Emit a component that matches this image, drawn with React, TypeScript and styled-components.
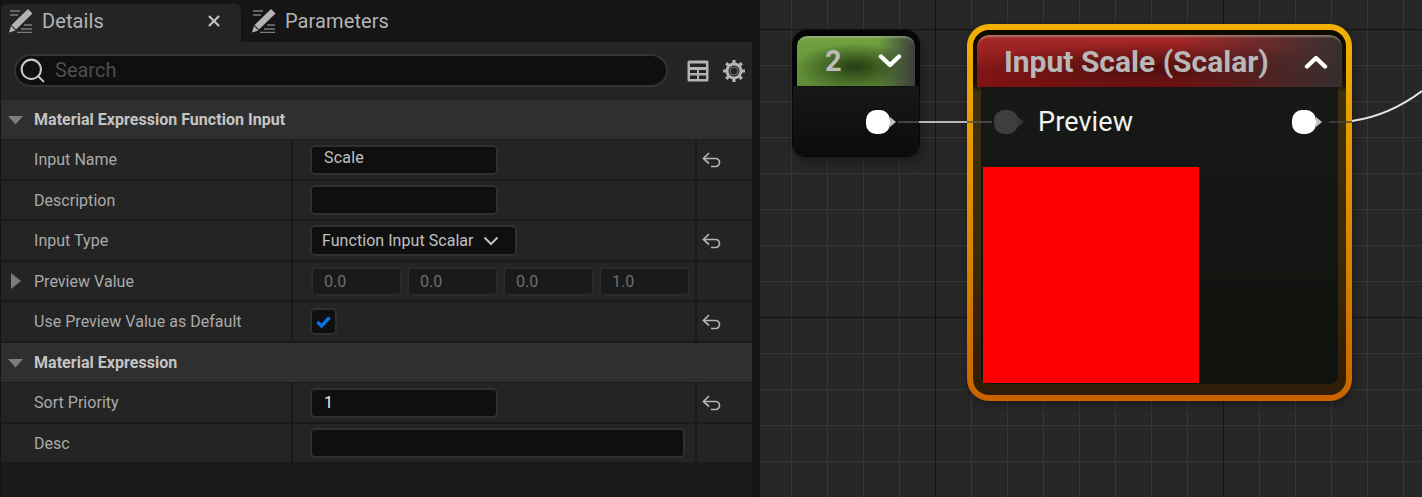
import { createGlobalStyle, styled } from 'styled-components';
import { Search as SearchIcon, X } from 'lucide-react';

const GlobalStyle = createGlobalStyle`
  html, body {
    margin: 0;
    background: #1a1a1a;
    overflow: hidden;
  }
  #root {
    width: 1422px;
    height: 497px;
  }
  * {
    box-sizing: border-box;
  }
`;

const Page = styled.div`
  display: flex;
  width: 1422px;
  height: 497px;
  font-family: Roboto, sans-serif;
  background: #151515;
`;

const Panel = styled.div`
  display: flex;
  flex-direction: column;
  flex: 0 0 752px;
  background: #1a1a1a;
  border-left: 1px solid #141414;
`;

const TabBar = styled.div`
  display: flex;
  align-items: flex-end;
  height: 42px;
  flex: none;
  background: #151515;
`;

const Tab = styled.div<{ $active?: boolean }>`
  display: flex;
  align-items: center;
  width: 240px;
  height: 38px;
  padding: 0 0 4px ${(p) => (p.$active ? 8 : 11)}px;
  border-radius: 6px 6px 0 0;
  background: ${(p) => (p.$active ? '#242424' : 'transparent')};
  color: #b4b4b4;
  font-size: 20px;
  letter-spacing: 0.1px;
  gap: 9px;
`;

const TabClose = styled.span`
  display: flex;
  margin-left: auto;
  margin-right: 18px;
  color: #c4c4c4;
`;

const Toolbar = styled.div`
  display: flex;
  align-items: center;
  height: 58px;
  flex: none;
  padding: 0 6px 1px 13px;
  background: #242424;
`;

const SearchBox = styled.div`
  display: flex;
  align-items: center;
  gap: 8px;
  width: 654px;
  height: 33px;
  padding-left: 2px;
  border: 2px solid #333;
  border-radius: 17px;
  background: #0f0f0f;
  color: #c8c8c8;
`;

const SearchText = styled.span`
  padding-bottom: 2px;
  color: #4e4e4e;
  font-size: 20px;
`;

const ToolIcons = styled.div`
  display: flex;
  align-items: center;
  gap: 13px;
  margin: 0 0 -1px 19px;
  color: #b4b4b4;
`;

const SectionHeader = styled.div`
  display: flex;
  align-items: center;
  gap: 11px;
  height: 40px;
  flex: none;
  padding-left: 7px;
  background: #2f2f2f;
  border-bottom: 1px solid #1c1c1c;
  color: #c4c4c4;
  font-size: 16px;
  font-weight: 700;
  letter-spacing: 0.03px;
`;

const Row = styled.div<{ $tall?: boolean }>`
  display: grid;
  grid-template-columns: 290px 404px 57px;
  height: ${(p) => (p.$tall ? 41 : 40)}px;
  flex: none;
  background: #242424;
  border-bottom: 2px solid #1a1a1a;
`;

const NameCell = styled.div`
  display: flex;
  align-items: center;
  padding-left: 33px;
  position: relative;
  color: #aaa;
  font-size: 16px;
  letter-spacing: 0.03px;
`;

const ExpandArrow = styled.span`
  position: absolute;
  left: 10px;
  top: 11px;
  width: 0;
  height: 0;
  border-style: solid;
  border-width: 8px 0 8px 10px;
  border-color: transparent transparent transparent #7a7a7a;
`;

const ValueCell = styled.div`
  display: flex;
  align-items: center;
  gap: 5px;
  padding-left: 17px;
  border-left: 2px solid #1a1a1a;
`;

const ResetCell = styled.div`
  display: flex;
  align-items: center;
  padding-left: 5px;
  border-left: 2px solid #1a1a1a;
  color: #b4b4b4;
`;

const Field = styled.div<{ $width: number }>`
  display: flex;
  align-items: center;
  width: ${(p) => p.$width}px;
  height: 30px;
  padding-left: 12px;
  border: 2px solid #303030;
  border-radius: 5px;
  background: #0f0f0f;
  color: #c0c0c0;
  font-size: 16px;
`;

const NameField = styled(Field)`
  padding-bottom: 5px;
  letter-spacing: 0.2px;
`;

const SortField = styled(Field)`
  color: #eee;
`;

const NumberField = styled.div`
  display: flex;
  align-items: center;
  width: 91px;
  height: 29px;
  padding-left: 11px;
  border: 2px solid #2a2a2a;
  border-radius: 5px;
  background: #1a1a1a;
  color: #6e6e6e;
  font-size: 16px;
  &:first-child {
    margin-left: 1px;
  }
`;

const Dropdown = styled.div`
  display: flex;
  align-items: center;
  gap: 9px;
  width: 207px;
  height: 31px;
  padding-left: 10px;
  border: 2px solid #303030;
  border-radius: 5px;
  background: #0f0f0f;
  color: #c0c0c0;
  font-size: 16px;
  letter-spacing: 0.05px;
`;

const CheckBox = styled.div`
  display: flex;
  align-items: center;
  justify-content: center;
  width: 27px;
  height: 27px;
  border: 2px solid #303030;
  border-radius: 5px;
  background: #0f0f0f;
  color: #0f70e0;
`;

const Gutter = styled.div`
  flex: 0 0 8px;
  background: #151515;
`;

const Canvas = styled.div`
  position: relative;
  flex: 1;
  overflow: hidden;
  background-color: #272727;
  background-image:
    linear-gradient(to right, #131313 1px, transparent 1px),
    linear-gradient(to bottom, #131313 1px, transparent 1px),
    linear-gradient(to right, #363636 1px, transparent 1px),
    linear-gradient(to bottom, #363636 1px, transparent 1px);
  background-size: 288px 288px, 288px 288px, 36px 36px, 36px 36px;
  background-position: 175px 29px, 175px 29px, 31px 29px, 31px 29px;
`;

const Wires = styled.svg`
  position: absolute;
  inset: 0;
  z-index: 3;
`;

const SmallNode = styled.div`
  position: absolute;
  left: 33px;
  top: 31px;
  width: 126px;
  height: 125px;
  padding: 5px 4px;
  border-radius: 13px;
  background: linear-gradient(to bottom, #050505 0, #050505 55px, #171917 56px, #0a0c09 100%);
  box-shadow: 0 0 0 1px #070707, 2px 4px 12px rgba(0, 0, 0, 0.45);
`;

const SmallHeader = styled.div`
  display: flex;
  align-items: center;
  justify-content: space-between;
  height: 50px;
  padding: 0 13px 0 28px;
  border-radius: 10px 10px 0 0;
  background:
    linear-gradient(to right, transparent 68%, #3c3c3c 100%),
    radial-gradient(ellipse 60px 24px at 58px 31px, #2a4416 10%, transparent 100%),
    linear-gradient(to bottom, #72a440, #5e8a36);
  box-shadow: inset 0 3px 2px -1px rgba(190, 190, 180, 0.45);
  color: #bcbcbc;
  font-size: 29px;
  font-weight: 700;
`;

const BigNode = styled.div`
  position: absolute;
  left: 207px;
  top: 24px;
  width: 385px;
  height: 377px;
  padding: 6px;
  border-radius: 22px;
  background: linear-gradient(to bottom, #f1b000, #c96400);
  box-shadow: 1px 3px 10px rgba(0, 0, 0, 0.35);
`;

const BigInner = styled.div`
  display: flex;
  flex-direction: column;
  height: 100%;
  padding: 5px 4px 0;
  border-radius: 16px;
  background: linear-gradient(to bottom, #0c0902 0, #1a1404 55px, #3d2f10 62px, #3a2a0e 220px, #2f1d08 100%);
`;

const BigHeader = styled.div`
  display: flex;
  align-items: center;
  justify-content: space-between;
  height: 52px;
  flex: none;
  padding: 0 14px 0 27px;
  border-radius: 12px 12px 0 0;
  background:
    linear-gradient(to right, transparent 55%, rgba(48, 48, 48, 0.95) 100%),
    radial-gradient(ellipse 200px 26px at 175px 34px, #541010 10%, transparent 100%),
    linear-gradient(to bottom, #a82a2a, #7e1010);
  box-shadow: inset 0 3px 2px -1px rgba(190, 190, 170, 0.5);
  color: #b8b8b8;
  font-size: 30px;
  font-weight: 700;
`;

const BigBody = styled.div`
  display: flex;
  flex-direction: column;
  height: 297px;
  flex: none;
  margin: 0 4px;
  background: linear-gradient(to bottom, #171917, #10120e);
  border-radius: 0 0 8px 8px;
`;

const PinRow = styled.div`
  display: flex;
  align-items: center;
  height: 70px;
  flex: none;
  padding: 0 15px 0 12px;
  color: #f2f2f2;
  font-size: 27px;
  letter-spacing: 0.1px;
`;

const PinLabel = styled.span`
  margin-left: 13px;
  margin-right: auto;
`;

const PreviewSwatch = styled.div`
  width: 216px;
  height: 216px;
  margin: 10px 0 0 2px;
  background: #ff0000;
`;

const PinSlot = styled.svg`
  flex: none;
`;

const SmallBody = styled.div`
  display: flex;
  justify-content: flex-end;
  align-items: center;
  height: 72px;
  padding-right: 18px;
`;

const PenIcon = () => (
  <svg width="24" height="24" viewBox="0 0 24 24">
    <path d="M1 2h10M1 6h8M15 16h8M12 20h11M8 23.5h15" stroke="#7c7c7c" strokeWidth="1.3" fill="none" />
    <path d="M19 0l4.5 4.5L7 20.5 2.5 16z" fill="#b4b4b4" />
    <path d="M0 23.5l2-6.5 4.5 4.5z" fill="#b4b4b4" />
  </svg>
);

const TableIcon = () => (
  <svg width="22" height="22" viewBox="0 0 22 22">
    <path
      fillRule="evenodd"
      fill="currentColor"
      d="M2 0.5h18a1.5 1.5 0 0 1 1.5 1.5v18a1.5 1.5 0 0 1-1.5 1.5H2a1.5 1.5 0 0 1-1.5-1.5V2A1.5 1.5 0 0 1 2 0.5zM3 3.5v3.5h16V3.5zM3 10v3h7v-3zM12 10v3h7v-3zM3 15.5v3.5h7v-3.5zM12 15.5v3.5h7v-3.5z"
    />
  </svg>
);

const GearIcon = () => (
  <svg width="24" height="24" viewBox="0 0 24 24" fill="none" stroke="currentColor">
    <circle cx="12" cy="12" r="7" strokeWidth="3" />
    <circle cx="12" cy="12" r="4" strokeWidth="1" stroke="#777" />
    <path
      strokeWidth="3.2"
      d="M12 1v4M12 19v4M1 12h4M19 12h4M4.2 4.2l2.8 2.8M17 17l2.8 2.8M4.2 19.8L7 17M17 7l2.8-2.8"
    />
  </svg>
);

const SectionArrow = () => (
  <svg width="15" height="10" viewBox="0 0 15 10">
    <path d="M0 1h15L7.5 9.5z" fill="#7d7d7d" />
  </svg>
);

const Chevron = ({ up }: { up?: boolean }) => (
  <svg width="24" height="15" viewBox="0 0 24 15" fill="none">
    <path
      d={up ? 'M3 12.5L12 4l9 8.5' : 'M3 2.5L12 11l9-8.5'}
      stroke="#fff"
      strokeWidth="4.4"
      strokeLinejoin="round"
      strokeLinecap="round"
    />
  </svg>
);

const SmallChevron = () => (
  <svg width="16" height="10" viewBox="0 0 16 10" fill="none">
    <path d="M1.5 1.5L8 8l6.5-6.5" stroke="#c0c0c0" strokeWidth="2" />
  </svg>
);

const CheckMark = () => (
  <svg width="15" height="12" viewBox="0 0 15 12" fill="none">
    <path d="M1.5 6l4 4L13.5 1.5" stroke="currentColor" strokeWidth="3.4" />
  </svg>
);

const Pin = ({ color }: { color: string }) => (
  <PinSlot width="32" height="26" viewBox="0 0 32 26">
    <rect x="1" y="1" width="24" height="24" rx="10" fill={color} />
    <path d="M25 8l6 5-6 5z" fill={color} opacity="0.75" />
  </PinSlot>
);

const ResetButton = () => (
  <svg width="19" height="16" viewBox="0 0 19 16" fill="none" stroke="currentColor" strokeWidth="1.7">
    <path d="M7 1L1.5 6.5 7 11.5" />
    <path d="M1.5 6.5H13.5a4 4 0 0 1 0 8H9" />
  </svg>
);

export default function App() {
  return (
    <Page>
      <GlobalStyle />
      <Panel>
        <TabBar>
          <Tab $active>
            <PenIcon />
            Details
            <TabClose>
              <X size={18} strokeWidth={2.8} />
            </TabClose>
          </Tab>
          <Tab>
            <PenIcon />
            Parameters
          </Tab>
        </TabBar>
        <Toolbar>
          <SearchBox>
            <SearchIcon size={29} strokeWidth={1.7} />
            <SearchText>Search</SearchText>
          </SearchBox>
          <ToolIcons>
            <TableIcon />
            <GearIcon />
          </ToolIcons>
        </Toolbar>

        <SectionHeader>
          <SectionArrow />
          Material Expression Function Input
        </SectionHeader>
        <Row $tall>
          <NameCell>Input Name</NameCell>
          <ValueCell>
            <NameField $width={188}>Scale</NameField>
          </ValueCell>
          <ResetCell>
            <ResetButton />
          </ResetCell>
        </Row>
        <Row>
          <NameCell>Description</NameCell>
          <ValueCell>
            <Field $width={188} />
          </ValueCell>
          <ResetCell />
        </Row>
        <Row $tall>
          <NameCell>Input Type</NameCell>
          <ValueCell>
            <Dropdown>
              Function Input Scalar
              <SmallChevron />
            </Dropdown>
          </ValueCell>
          <ResetCell>
            <ResetButton />
          </ResetCell>
        </Row>
        <Row>
          <NameCell>
            <ExpandArrow />
            Preview Value
          </NameCell>
          <ValueCell>
            <NumberField>0.0</NumberField>
            <NumberField>0.0</NumberField>
            <NumberField>0.0</NumberField>
            <NumberField>1.0</NumberField>
          </ValueCell>
          <ResetCell />
        </Row>
        <Row $tall>
          <NameCell>Use Preview Value as Default</NameCell>
          <ValueCell>
            <CheckBox>
              <CheckMark />
            </CheckBox>
          </ValueCell>
          <ResetCell>
            <ResetButton />
          </ResetCell>
        </Row>

        <SectionHeader>
          <SectionArrow />
          Material Expression
        </SectionHeader>
        <Row $tall>
          <NameCell>Sort Priority</NameCell>
          <ValueCell>
            <SortField $width={188}>1</SortField>
          </ValueCell>
          <ResetCell>
            <ResetButton />
          </ResetCell>
        </Row>
        <Row>
          <NameCell>Desc</NameCell>
          <ValueCell>
            <Field $width={375} />
          </ValueCell>
          <ResetCell />
        </Row>
      </Panel>
      <Gutter />
      <Canvas>
        <SmallNode>
          <SmallHeader>
            2
            <Chevron />
          </SmallHeader>
          <SmallBody>
            <Pin color="#fff" />
          </SmallBody>
        </SmallNode>
        <BigNode>
          <BigInner>
            <BigHeader>
              Input Scale (Scalar)
              <Chevron up />
            </BigHeader>
            <BigBody>
              <PinRow>
                <Pin color="#3e3e3e" />
                <PinLabel>Preview</PinLabel>
                <Pin color="#fff" />
              </PinRow>
              <PreviewSwatch />
            </BigBody>
          </BigInner>
        </BigNode>
        <Wires width="662" height="497" viewBox="0 0 662 497" fill="none">
          <path d="M138 122h21" stroke="#555" strokeWidth="1.5" />
          <path d="M159 122h48" stroke="#e8e8e8" strokeWidth="1.5" />
          <path d="M207 122h25" stroke="#555" strokeWidth="1.5" />
          <path d="M569 122h23" stroke="#444" strokeWidth="1.5" />
          <path d="M592 121C620 117 642 106 662 91" stroke="#e8e8e8" strokeWidth="2" />
        </Wires>
      </Canvas>
    </Page>
  );
}
